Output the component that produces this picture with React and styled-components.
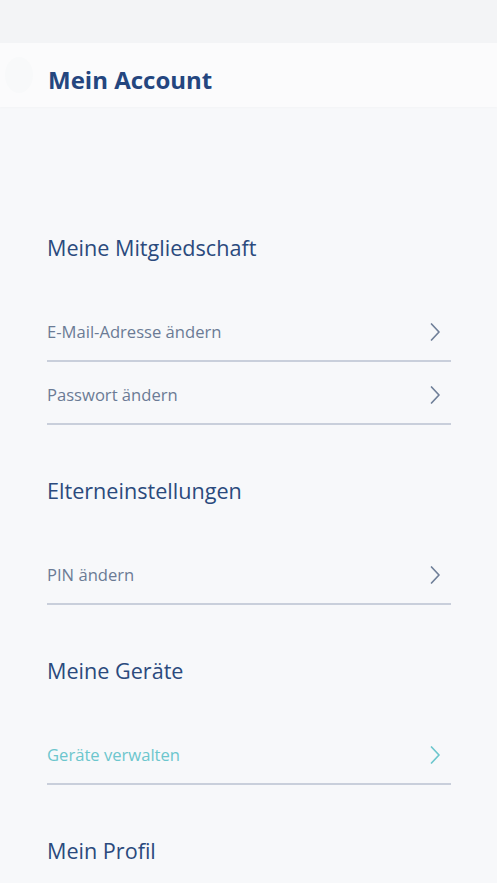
import styled, { createGlobalStyle } from "styled-components";

const GlobalStyle = createGlobalStyle`
    html, body {
        margin: 0;
        padding: 0;
        background: #f7f8fa;
    }
    * {
        box-sizing: border-box;
    }
`;

function Chevron({ color }) {
    return (
        <svg width="12" height="20" viewBox="0 0 12 20" fill="none">
            <path d="M2.5 2 L10 10 L2.5 18" stroke={color} strokeWidth="1.7" strokeLinecap="round" strokeLinejoin="round" />
        </svg>
    );
}

function Item({ label, highlight }) {
    const color = highlight ? "#6cc6cd" : "#6f7f98";
    return (
        <Row>
            <ItemLabel $highlight={highlight}>{label}</ItemLabel>
            <Chevron color={color} />
        </Row>
    );
}

const sections = [
    { title: "Meine Mitgliedschaft", items: ["E-Mail-Adresse ändern", "Passwort ändern"] },
    { title: "Elterneinstellungen", items: ["PIN ändern"] },
    { title: "Meine Geräte", items: ["Geräte verwalten"], highlight: true },
    { title: "Mein Profil", items: [] },
];

export default function App() {
    return (
        <Page>
            <GlobalStyle />
            <StatusBar />
            <Header>
                <GhostButton />
                <Title>Mein Account</Title>
            </Header>
            <Content>
                {sections.map((section) => (
                    <Section key={section.title}>
                        <SectionTitle>{section.title}</SectionTitle>
                        {section.items.map((item) => (
                            <Item key={item} label={item} highlight={section.highlight} />
                        ))}
                    </Section>
                ))}
            </Content>
        </Page>
    );
}

const Page = styled.div`
    width: 100%;
    min-height: 883px;
    background: #f7f8fa;
    font-family: "Open Sans", "Noto Sans", sans-serif;
    overflow: hidden;
`;

const StatusBar = styled.div`
    height: 43px;
    background: #f3f4f6;
`;

const Header = styled.div`
    position: relative;
    display: flex;
    align-items: center;
    height: 64px;
    padding: 8px 0 0 48px;
    background: #fbfbfc;
    box-shadow: 0 1px 2px rgba(0, 0, 0, 0.02);
`;

const GhostButton = styled.div`
    position: absolute;
    left: 5px;
    top: 14px;
    width: 28px;
    height: 36px;
    border-radius: 50%;
    background: #f8f9fa;
`;

const Title = styled.h1`
    margin: 0;
    font-size: 24px;
    font-weight: 700;
    color: #24467f;
    letter-spacing: 0;
`;

const Content = styled.div`
    padding: 0 46px 0 47px;
`;

const Section = styled.section`
    &:first-child h2 {
        padding-top: 127px;
    }
`;

const SectionTitle = styled.h2`
    margin: 0;
    padding: 52px 0 37px 0;
    font-size: 21.6px;
    line-height: 28px;
    font-weight: 400;
    color: #2b4a7d;
`;

const Row = styled.div`
    display: flex;
    align-items: center;
    justify-content: space-between;
    height: 63px;
    padding: 4px 10px 0 0;
    border-bottom: 2px solid #c9cfdb;
`;

const ItemLabel = styled.span`
    font-size: 16.6px;
    color: ${(p) => (p.$highlight ? "#6cc6cd" : "#6b7b95")};
`;
